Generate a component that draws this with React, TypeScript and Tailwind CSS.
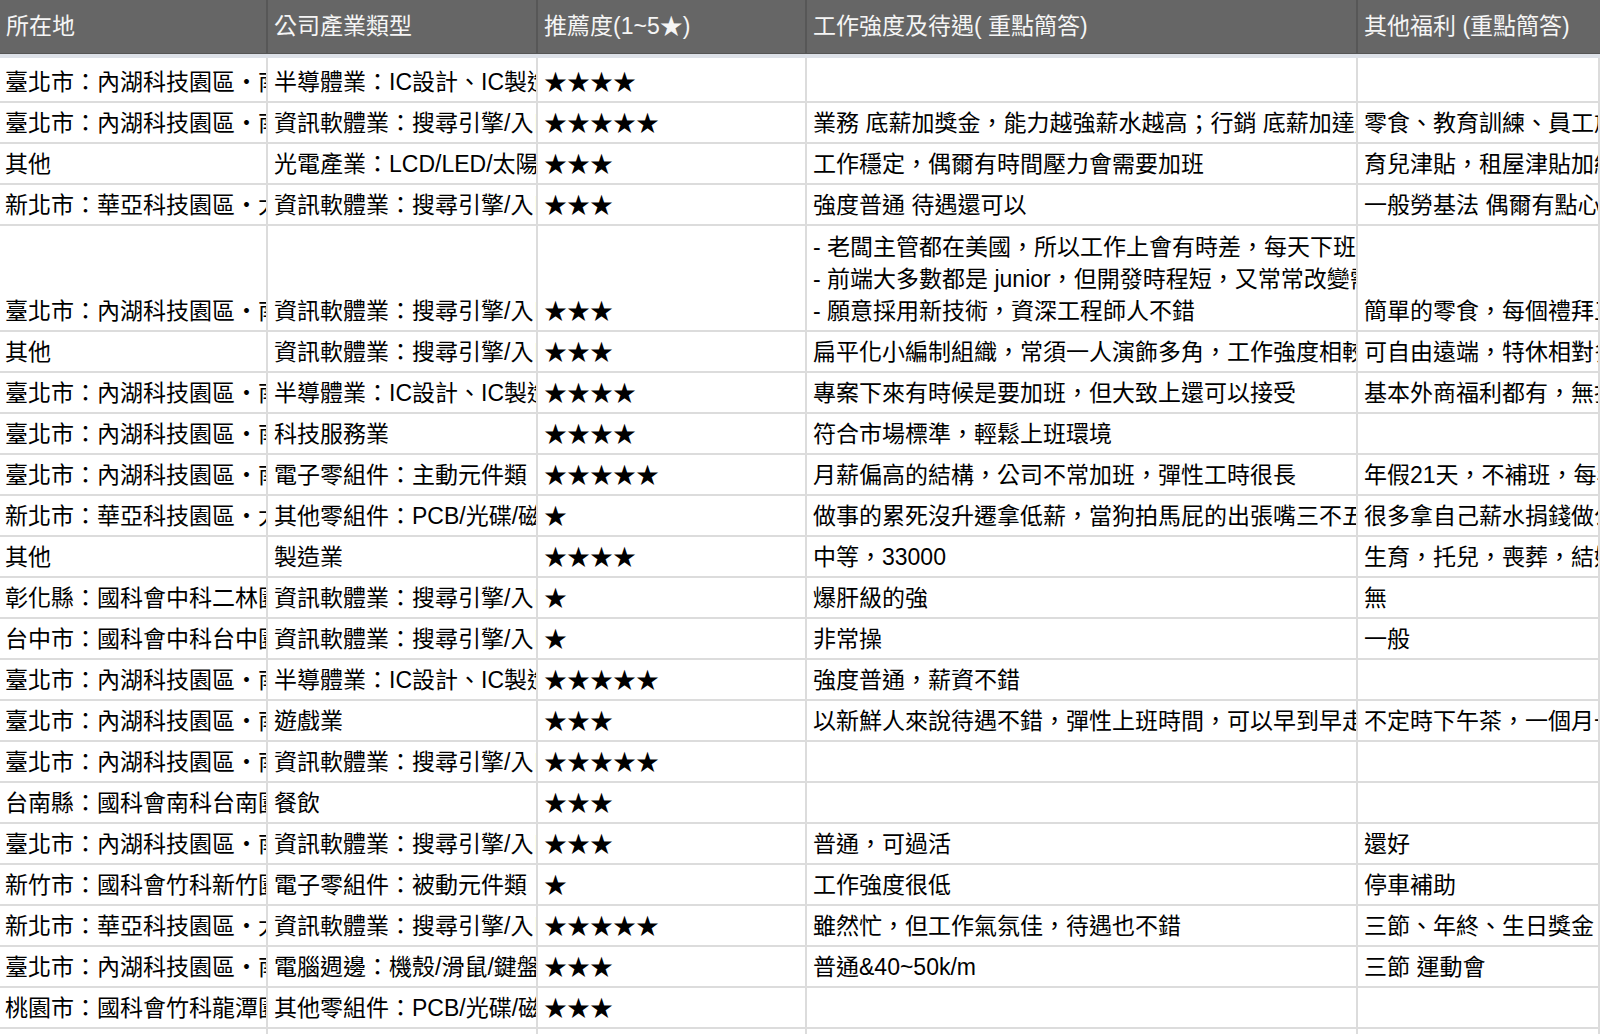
import React from "react";

type Row = {
  place: string;
  industry: string;
  stars: number;
  work: string[];
  perks: string;
};

const rows: Row[] = [
  { place: "臺北市：內湖科技園區‧南港軟體園區", industry: "半導體業：IC設計、IC製造", stars: 4, work: [], perks: "" },
  { place: "臺北市：內湖科技園區‧南港軟體園區", industry: "資訊軟體業：搜尋引擎/入口網站", stars: 5, work: ["業務 底薪加獎金，能力越強薪水越高；行銷 底薪加達成獎金"], perks: "零食、教育訓練、員工旅遊" },
  { place: "其他", industry: "光電產業：LCD/LED/太陽能", stars: 3, work: ["工作穩定，偶爾有時間壓力會需要加班"], perks: "育兒津貼，租屋津貼加給" },
  { place: "新北市：華亞科技園區‧大園", industry: "資訊軟體業：搜尋引擎/入口網站", stars: 3, work: ["強度普通 待遇還可以"], perks: "一般勞基法 偶爾有點心" },
  {
    place: "臺北市：內湖科技園區‧南港軟體園區",
    industry: "資訊軟體業：搜尋引擎/入口網站",
    stars: 3,
    work: [
      "- 老闆主管都在美國，所以工作上會有時差，每天下班後還要開會",
      "- 前端大多數都是 junior，但開發時程短，又常常改變需求",
      "- 願意採用新技術，資深工程師人不錯",
    ],
    perks: "簡單的零食，每個禮拜五下午茶",
  },
  { place: "其他", industry: "資訊軟體業：搜尋引擎/入口網站", stars: 3, work: ["扁平化小編制組織，常須一人演飾多角，工作強度相較大公司高"], perks: "可自由遠端，特休相對多" },
  { place: "臺北市：內湖科技園區‧南港軟體園區", industry: "半導體業：IC設計、IC製造", stars: 4, work: ["專案下來有時候是要加班，但大致上還可以接受"], perks: "基本外商福利都有，無打卡" },
  { place: "臺北市：內湖科技園區‧南港軟體園區", industry: "科技服務業", stars: 4, work: ["符合市場標準，輕鬆上班環境"], perks: "" },
  { place: "臺北市：內湖科技園區‧南港軟體園區", industry: "電子零組件：主動元件類", stars: 5, work: ["月薪偏高的結構，公司不常加班，彈性工時很長"], perks: "年假21天，不補班，每年調薪" },
  { place: "新北市：華亞科技園區‧大園", industry: "其他零組件：PCB/光碟/磁碟", stars: 1, work: ["做事的累死沒升遷拿低薪，當狗拍馬屁的出張嘴三不五時升官"], perks: "很多拿自己薪水捐錢做公益" },
  { place: "其他", industry: "製造業", stars: 4, work: ["中等，33000"], perks: "生育，托兒，喪葬，結婚補助" },
  { place: "彰化縣：國科會中科二林園區", industry: "資訊軟體業：搜尋引擎/入口網站", stars: 1, work: ["爆肝級的強"], perks: "無" },
  { place: "台中市：國科會中科台中園區", industry: "資訊軟體業：搜尋引擎/入口網站", stars: 1, work: ["非常操"], perks: "一般" },
  { place: "臺北市：內湖科技園區‧南港軟體園區", industry: "半導體業：IC設計、IC製造", stars: 5, work: ["強度普通，薪資不錯"], perks: "" },
  { place: "臺北市：內湖科技園區‧南港軟體園區", industry: "遊戲業", stars: 3, work: ["以新鮮人來說待遇不錯，彈性上班時間，可以早到早走"], perks: "不定時下午茶，一個月一次聚餐" },
  { place: "臺北市：內湖科技園區‧南港軟體園區", industry: "資訊軟體業：搜尋引擎/入口網站", stars: 5, work: [], perks: "" },
  { place: "台南縣：國科會南科台南園區", industry: "餐飲", stars: 3, work: [], perks: "" },
  { place: "臺北市：內湖科技園區‧南港軟體園區", industry: "資訊軟體業：搜尋引擎/入口網站", stars: 3, work: ["普通，可過活"], perks: "還好" },
  { place: "新竹市：國科會竹科新竹園區", industry: "電子零組件：被動元件類", stars: 1, work: ["工作強度很低"], perks: "停車補助" },
  { place: "新北市：華亞科技園區‧大園", industry: "資訊軟體業：搜尋引擎/入口網站", stars: 5, work: ["雖然忙，但工作氣氛佳，待遇也不錯"], perks: "三節、年終、生日獎金" },
  { place: "臺北市：內湖科技園區‧南港軟體園區", industry: "電腦週邊：機殼/滑鼠/鍵盤", stars: 3, work: ["普通&40~50k/m"], perks: "三節 運動會" },
  { place: "桃園市：國科會竹科龍潭園區", industry: "其他零組件：PCB/光碟/磁碟", stars: 3, work: [], perks: "" },
  { place: "", industry: "", stars: 0, work: [], perks: "" },
];

const cols = "grid grid-cols-[268px_270px_269px_551px_1fr]";
const cell = "flex flex-col justify-end overflow-hidden whitespace-nowrap border-r-2 border-b-2 border-[#dcdcdc] px-[6px] pb-[3px] leading-[32px]";

function HeaderCell({ children, last }: { children: React.ReactNode; last?: boolean }) {
  return (
    <div className={`flex items-center overflow-hidden whitespace-nowrap px-[6px] ${last ? "" : "border-r-2 border-[#575757]"}`}>
      {children}
    </div>
  );
}

export default function App() {
  return (
    <div
      className="h-[1034px] w-[1600px] overflow-hidden bg-white text-[23px] text-black"
      style={{ fontFamily: '"Liberation Sans", "Noto Sans CJK TC", sans-serif' }}
    >
      <div className={`${cols} h-[53px] bg-[#666666] text-[#f5f5f5]`}>
        <HeaderCell>所在地</HeaderCell>
        <HeaderCell>公司產業類型</HeaderCell>
        <HeaderCell>推薦度(1~5★)</HeaderCell>
        <HeaderCell>工作強度及待遇( 重點簡答)</HeaderCell>
        <HeaderCell last>其他福利 (重點簡答)</HeaderCell>
      </div>
      <div className="h-[5px] border-t border-[#555555] bg-[#dde1e8]" />
      {rows.map((r, i) => (
        <div key={i} className={`${cols} ${r.work.length > 1 ? "h-[106px]" : i === 0 ? "h-[45px]" : "h-[41px]"}`}>
          <div className={`${cell} pl-[5px]`}>{r.place}</div>
          <div className={cell}>{r.industry}</div>
          <div className={cell}>{"★".repeat(r.stars)}</div>
          <div className={cell}>
            {r.work.map((w, j) => (
              <div key={j}>{w}</div>
            ))}
          </div>
          <div className={`${cell} border-r-0`}>{r.perks}</div>
        </div>
      ))}
    </div>
  );
}
